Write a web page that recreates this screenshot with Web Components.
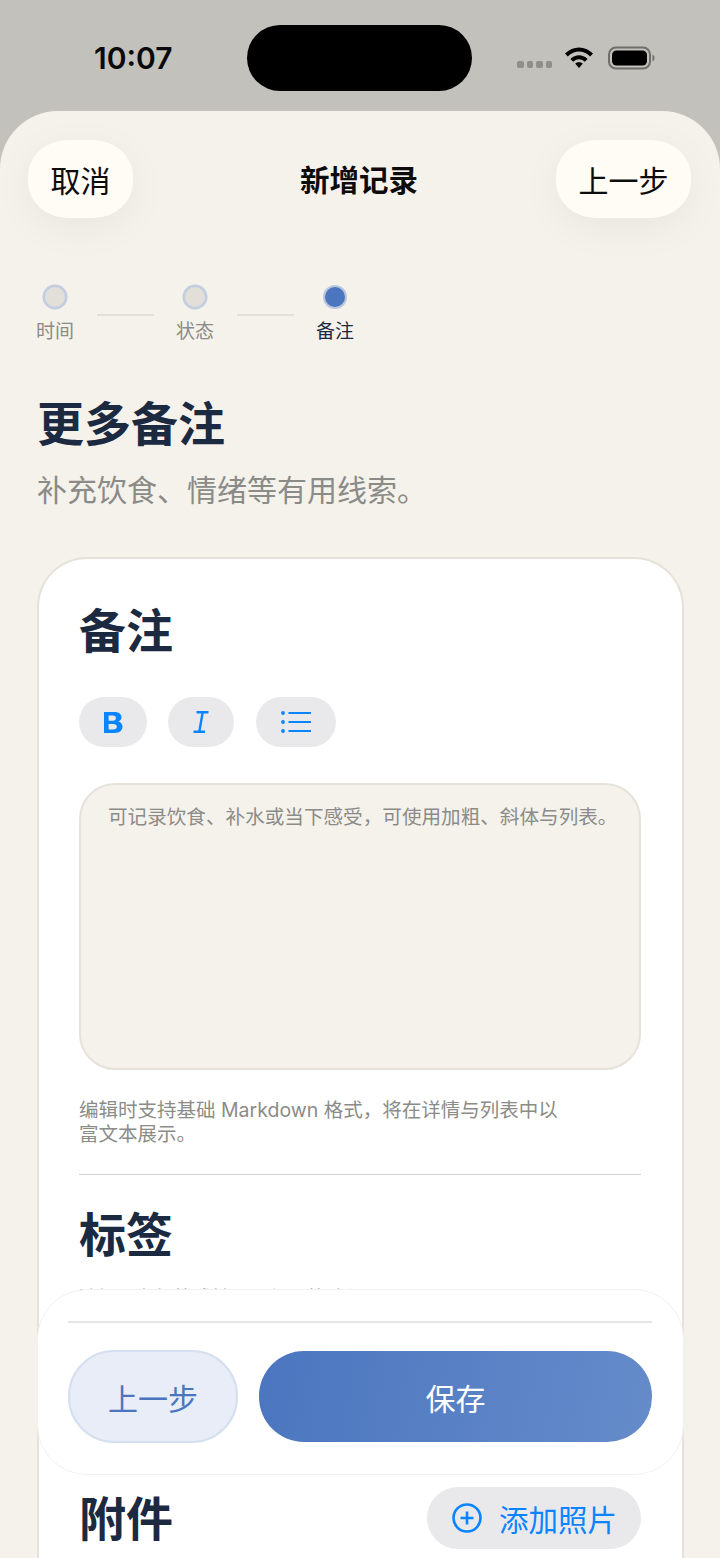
<!DOCTYPE html>
<html lang="zh">
<head>
<meta charset="utf-8">
<style>
  html, body { margin: 0; padding: 0; }
  body {
    width: 720px;
    height: 1558px;
    overflow: hidden;
    background: #c2c1bc;
    font-family: Inter, "Noto Sans CJK SC", sans-serif;
    position: relative;
  }
</style>
</head>
<body>
<status-bar></status-bar>
<app-sheet>
  <nav-header slot="head" title="新增记录" left="取消" right="上一步"></nav-header>
  <step-row></step-row>
  <page-title heading="更多备注" sub="补充饮食、情绪等有用线索。"></page-title>
  <form-card></form-card>
</app-sheet>
<action-bar></action-bar>

<script>
class StatusBar extends HTMLElement {
  constructor() {
    super();
    this.attachShadow({ mode: 'open' }).innerHTML = `
      <style>
        :host { display: block; height: 111px; position: relative; }
        .wrap { display: flex; align-items: center; height: 116px; padding: 0 65px 0 94px; box-sizing: border-box; justify-content: space-between; }
        .time { font: 600 30px/1 Inter, sans-serif; color: #0a0a0a; }
        .right { display: flex; align-items: center; gap: 0; }
        .dots { display: flex; gap: 3px; margin: 12px 12px 0 0; }
        .dots i { width: 6.500px; height: 7px; border-radius: 2px; background: #8f8e8a; display: block; }
        .wifi { margin: -2px 14px 0 0; }
        .island { position: absolute; left: 247px; top: 25px; width: 225px; height: 66px; background: #000; border-radius: 33px; }
      </style>
      <div class="wrap">
        <span class="time">10:07</span>
        <div class="right">
          <div class="dots"><i></i><i></i><i></i><i></i></div>
          <svg class="wifi" width="30" height="22" viewBox="0 0 30 22">
            <path d="M1 7.5 C9 -0.5 21 -0.5 29 7.5 L26.2 10.4 C19.5 4 10.5 4 3.8 10.4Z" fill="#000"/>
            <path d="M6.4 13 C11.5 8 18.5 8 23.6 13 L20.8 15.8 C17.2 12.5 12.8 12.5 9.2 15.8Z" fill="#000"/>
            <path d="M11.2 17.6 C13.4 15.7 16.6 15.7 18.8 17.6 L15 22Z" fill="#000"/>
          </svg>
          <svg width="47" height="24" viewBox="0 0 47 24">
            <rect x="1" y="1.5" width="41" height="21" rx="7" fill="none" stroke="#6f6e6b" stroke-width="2"/>
            <rect x="4" y="4.5" width="35" height="15" rx="4.5" fill="#000"/>
            <path d="M44.5 8.5 C46 9.5 46.5 10.5 46.5 12 C46.5 13.5 46 14.5 44.5 15.5Z" fill="#6f6e6b"/>
          </svg>
        </div>
      </div>
      <div class="island"></div>`;
  }
}

class AppSheet extends HTMLElement {
  constructor() {
    super();
    this.attachShadow({ mode: 'open' }).innerHTML = `
      <style>
        :host {
          display: block;
          height: 1447px;
          background: #f5f2ec;
          border-radius: 58px 58px 0 0;
          overflow: hidden;
        }
      </style>
      <slot name="head"></slot>
      <slot></slot>`;
  }
}

class NavHeader extends HTMLElement {
  connectedCallback() {
    if (this.shadowRoot) return;
    this.attachShadow({ mode: 'open' }).innerHTML = `
      <style>
        :host { display: flex; align-items: center; justify-content: space-between; padding: 29px 29px 0 28px; position: relative; }
        button {
          all: unset;
          height: 78px;
          padding: 0 22.5px;
          display: flex;
          align-items: center;
          border-radius: 40px / 36px;
          background: #fffbf5;
          color: #0c0c0c;
          font: 400 30px "Noto Sans CJK SC", sans-serif;
          box-shadow: 0 10px 40px rgba(0,0,0,.05);
        }
        h1 { margin: 0; font: 600 29.500px "Noto Sans CJK SC", sans-serif; color: #0c0c0c; position: absolute; left: 300px; top: 45px; line-height: 44px; }
      </style>
      <button>${this.getAttribute('left')}</button>
      <h1>${this.getAttribute('title')}</h1>
      <button>${this.getAttribute('right')}</button>`;
  }
}

class StepRow extends HTMLElement {
  constructor() {
    super();
    const step = (label, on) => `
      <div class="step ${on ? 'on' : ''}"><span class="dot"></span><span class="lbl">${label}</span></div>`;
    this.attachShadow({ mode: 'open' }).innerHTML = `
      <style>
        :host { display: flex; align-items: flex-start; padding: 66px 0 0 36px; }
        .step { display: flex; flex-direction: column; align-items: center; width: 38px; gap: 7px; }
        .dot { width: 20px; height: 20px; margin: 2.5px; border-radius: 50%; background: #e2dfd8; box-shadow: 0 0 0 2.5px rgba(75,118,191,.3); display: block; }
        .lbl { font: 400 19px/28px "Noto Sans CJK SC", sans-serif; color: #8b8b87; white-space: nowrap; }
        .on .dot { background: #4b76bf; box-shadow: 0 0 0 2px rgba(75,118,191,.35); }
        .on .lbl { color: #1b2a41; }
        .line { width: 57px; height: 2px; background: #e4e0d9; margin: 30px 22px 0 23px; }
      </style>
      ${step('时间')}<span class="line"></span>${step('状态')}<span class="line"></span>${step('备注', true)}`;
  }
}

class PageTitle extends HTMLElement {
  connectedCallback() {
    if (this.shadowRoot) return;
    this.attachShadow({ mode: 'open' }).innerHTML = `
      <style>
        :host { display: block; padding: 45px 37px 0; }
        h2 { margin: 0; font: 600 47px/64px "Noto Sans CJK SC", sans-serif; color: #1b2a41; }
        p { margin: 14px 0 0; font: 400 30px/42px "Noto Sans CJK SC", sans-serif; color: #8b8b87; }
      </style>
      <h2>${this.getAttribute('heading')}</h2>
      <p>${this.getAttribute('sub')}</p>`;
  }
}

class ToolPill extends HTMLElement {
  constructor() {
    super();
    this.attachShadow({ mode: 'open' }).innerHTML = `
      <style>
        :host { display: flex; align-items: center; justify-content: center; height: 50px; background: #e9e9eb; border-radius: 25px; }
      </style>
      <slot></slot>`;
  }
}

class FormCard extends HTMLElement {
  constructor() {
    super();
    this.attachShadow({ mode: 'open' }).innerHTML = `
      <style>
        :host {
          display: block;
          margin: 48px 36px 0 37px;
          padding: 37px 41px 0 40px;
          background: #fff;
          border: 2px solid #e6e2da;
          border-bottom: 0;
          border-radius: 50px 50px 0 0;
          height: 1010px;
          box-sizing: border-box;
        }
        h3 { margin: 0; font: 600 47px/64px "Noto Sans CJK SC", sans-serif; color: #1b2a41; }
        .tools { display: flex; gap: 21px; margin-top: 37px; }
        .area {
          margin-top: 36px;
          height: 287px;
          box-sizing: border-box;
          background: #f5f2ec;
          border: 2px solid #e6e2da;
          border-radius: 36px;
          padding: 17px 27px;
          font: 400 19.600px/28px "Noto Sans CJK SC", sans-serif;
          color: #8b8b87;
          white-space: nowrap;
        }
        .help { margin: 28px 0 0; width: 490px; font: 400 19.500px/24px Inter, "Noto Sans CJK SC", sans-serif; color: #8b8b87; }
        hr { border: 0; height: 1px; background: #cfcfcf; margin: 28px 0 0; }
        .tag { margin-top: 25px; }
        .tip { margin: 19px 0 0; font: 400 19px/28px "Noto Sans CJK SC", sans-serif; color: #8b8b87; }
        .row { display: flex; justify-content: space-between; align-items: center; margin-top: 176px; }
        .row h3 { margin-top: -4px; }
        .add {
          display: flex; align-items: center; gap: 17px;
          height: 62px; padding: 0 24px 0 25px;
          background: #e9e9eb; border-radius: 31px;
          color: #0a84ff; font: 400 29.500px "Noto Sans CJK SC", sans-serif;
        }
      </style>
      <h3>备注</h3>
      <div class="tools">
        <tool-pill style="width:68px"><svg width="19" height="21" viewBox="0 0 19 21"><path fill-rule="evenodd" d="M0 0h10.500c4.500 0 7 2.200 7 5.300 0 2.100-1.400 3.800-3.400 4.300 2.500.4 4.400 2.300 4.400 5 0 3.800-2.900 6.400-7.500 6.400H0zM4.600 3.500v5.200h4.100c2 0 3.200-1 3.200-2.700 0-1.600-1.100-2.500-3-2.500zm0 8.400v5.600h4.500c2.300 0 3.700-1 3.700-2.800 0-1.800-1.400-2.800-3.800-2.800z" fill="#0a84ff"/></svg></tool-pill>
        <tool-pill style="width:66px"><svg width="16" height="22" viewBox="0 0 16 22"><path d="M3.500 1.200h12M.5 20.800h11.500M9.700 1.200 6.300 20.800" stroke="#0a84ff" stroke-width="2.400" fill="none"/></svg></tool-pill>
        <tool-pill style="width:80px;margin-left:1px"><svg width="30" height="22" viewBox="0 0 30 22"><g fill="#0a84ff"><circle cx="2" cy="2" r="1.900"/><circle cx="2" cy="11" r="1.900"/><circle cx="2" cy="20" r="1.900"/></g><path d="M7.500 2H30M7.500 11H30M7.500 20H30" stroke="#0a84ff" stroke-width="2.200"/></svg></tool-pill>
      </div>
      <div class="area">可记录饮食、补水或当下感受，可使用加粗、斜体与列表。</div>
      <p class="help">编辑时支持基础 Markdown 格式，将在详情与列表中以富文本展示。</p>
      <hr>
      <h3 class="tag">标签</h3>
      <p class="tip">选择已有标签或输入，便于筛选与回顾。</p>
      <div class="row">
        <h3>附件</h3>
        <div class="add">
          <svg width="30" height="30" viewBox="0 0 30 30" fill="none" stroke="#0a84ff" stroke-width="2.600"><circle cx="15" cy="15" r="13.500"/><path d="M15 8.500v13M8.500 15h13"/></svg>
          添加照片
        </div>
      </div>`;
  }
}

class ActionBar extends HTMLElement {
  constructor() {
    super();
    this.attachShadow({ mode: 'open' }).innerHTML = `
      <style>
        :host {
          position: absolute;
          left: 37px; top: 1289px;
          width: 647px; height: 186px;
          box-sizing: border-box;
          padding: 31px 31px 0 30px;
          background: #fff;
          border: 1px solid #f1f1f1;
          border-radius: 50px;
        }
        .rule { height: 2px; background: #e5e5e5; }
        .btns { display: flex; gap: 21px; margin-top: 27px; align-items: center; }
        button { all: unset; display: flex; align-items: center; justify-content: center; font: 400 30px "Noto Sans CJK SC", sans-serif; box-sizing: border-box; }
        .back { width: 170px; height: 93px; border-radius: 46px; background: #e8edf7; border: 2px solid #d4dff0; color: #4b76bf; }
        .save { flex: 1; height: 91px; border-radius: 45px; background: linear-gradient(100deg, #4b76bf, #658bca); color: #fff; }
      </style>
      <div class="rule"></div>
      <div class="btns">
        <button class="back">上一步</button>
        <button class="save">保存</button>
      </div>`;
  }
}

customElements.define('status-bar', StatusBar);
customElements.define('app-sheet', AppSheet);
customElements.define('nav-header', NavHeader);
customElements.define('step-row', StepRow);
customElements.define('page-title', PageTitle);
customElements.define('tool-pill', ToolPill);
customElements.define('form-card', FormCard);
customElements.define('action-bar', ActionBar);
</script>
</body>
</html>
